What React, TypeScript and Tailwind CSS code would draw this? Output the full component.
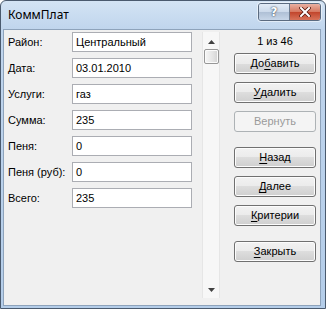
import React from "react";

const fields: [string, string][] = [
  ["Район:", "Центральный"],
  ["Дата:", "03.01.2010"],
  ["Услуги:", "газ"],
  ["Сумма:", "235"],
  ["Пеня:", "0"],
  ["Пеня (руб):", "0"],
  ["Всего:", "235"],
];

interface BtnProps {
  pre?: string;
  hot?: string;
  post?: string;
  disabled?: boolean;
  className?: string;
}

function Btn({ pre = "", hot = "", post = "", disabled, className = "" }: BtnProps) {
  if (disabled) {
    return (
      <div
        className={`flex h-[21px] w-[82px] items-center justify-center rounded-[3px] border border-[#adb2b5] bg-[#f4f4f4] text-[#9a9a9a] ${className}`}
      >
        {pre}
        {hot}
        {post}
      </div>
    );
  }
  return (
    <div
      className={`flex h-[21px] w-[82px] items-center justify-center rounded-[3px] border border-[#707070] bg-[linear-gradient(#f2f2f2,#ebebeb_50%,#dddddd_50%,#cfcfcf)] text-black shadow-[inset_0_0_0_1px_#fcfcfc] ${className}`}
    >
      {pre}
      <span className="underline decoration-1 underline-offset-2">{hot}</span>
      {post}
    </div>
  );
}

function Arrow({ down }: { down?: boolean }) {
  return (
    <svg width="7" height="4" viewBox="0 0 7 4">
      <path d={down ? "M0 0H7L3.5 4Z" : "M0 4H7L3.5 0Z"} fill="#404040" />
    </svg>
  );
}

export default function App() {
  return (
    <div className="flex h-[309px] w-[326px] flex-col overflow-hidden rounded-t-[6px] border border-[#4a5a6e] bg-[linear-gradient(to_bottom,#d3e3f4,#c0d5ed_28px,#b4cde9)] font-['Liberation_Sans',Arial,sans-serif] text-[11px] text-black">
      {/* title bar */}
      <div className="flex h-[28px] items-start justify-between">
        <div className="pl-[7px] pt-[6px] font-['Noto_Sans',sans-serif] text-[12px] leading-[16px] text-black">
          КоммПлат
        </div>
        <div className="mr-[4px] mt-[2px] flex h-[18px] overflow-hidden rounded-[3px] border border-[#5b6b80] shadow-[0_0_0_1px_rgba(255,255,255,0.5)]">
          <div className="flex w-[31px] items-center justify-center border-r border-[#6d7c90] bg-[linear-gradient(#e3ecf6,#cbd9ea_50%,#aebfd5_50%,#c7d6e8)] font-['DejaVu_Sans',sans-serif] text-[12px] font-bold leading-none text-white [text-shadow:0_0_2px_#3b4a5e,0_0_1px_#3b4a5e]">
            ?
          </div>
          <div className="flex w-[30px] items-center justify-center bg-[linear-gradient(#eab0a2,#d6775f_50%,#c1442b_50%,#d8735a)]">
            <svg width="12" height="10" viewBox="0 0 12 10">
              <path d="M2 1L10 9M10 1L2 9" stroke="#5a1a10" strokeWidth="3.6" strokeLinecap="square" />
              <path d="M2 1L10 9M10 1L2 9" stroke="#ffffff" strokeWidth="2" strokeLinecap="square" />
            </svg>
          </div>
        </div>
      </div>

      {/* client area */}
      <div className="mb-[2px] ml-[2px] mr-[4px] flex flex-1 border border-[#8ea3bb] bg-[#f0f0f0]">
        <div className="flex flex-col gap-[6px] pl-[4px] pt-[2px]">
          {fields.map(([label, value]) => (
            <div key={label} className="flex h-[20px] items-center">
              <div className="w-[64px] whitespace-nowrap">{label}</div>
              <div className="flex h-[20px] w-[120px] items-center border border-[#abadb3] bg-white pl-[3px]">
                {value}
              </div>
            </div>
          ))}
        </div>

        {/* scrollbar */}
        <div className="mb-[7px] ml-[10px] mt-[2px] flex w-[18px] flex-col items-center border-x border-[#e6e6e6] bg-[#f7f7f7]">
          <div className="flex h-[17px] items-center justify-center pt-[2px]">
            <Arrow />
          </div>
          <div className="h-[15px] w-[15px] rounded-[2px] border border-[#979797] bg-[linear-gradient(to_right,#f6f6f6,#e4e4e4_60%,#d3d3d3)] shadow-[inset_0_0_0_1px_#fbfbfb]" />
          <div className="flex-1" />
          <div className="flex h-[17px] items-center justify-center">
            <Arrow down />
          </div>
        </div>

        {/* buttons */}
        <div className="flex flex-col pl-[14px] pt-[3px]">
          <div className="h-[16px] w-[82px] text-center leading-[16px]">1 из 46</div>
          <Btn className="mt-[4px]" pre="До" hot="б" post="авить" />
          <Btn className="mt-[8px]" hot="У" post="далить" />
          <Btn className="mt-[8px]" pre="Вернуть" disabled />
          <Btn className="mt-[15px]" hot="Н" post="азад" />
          <Btn className="mt-[8px]" hot="Д" post="алее" />
          <Btn className="mt-[8px]" hot="К" post="ритерии" />
          <Btn className="mt-[15px]" hot="З" post="акрыть" />
        </div>
      </div>
    </div>
  );
}
